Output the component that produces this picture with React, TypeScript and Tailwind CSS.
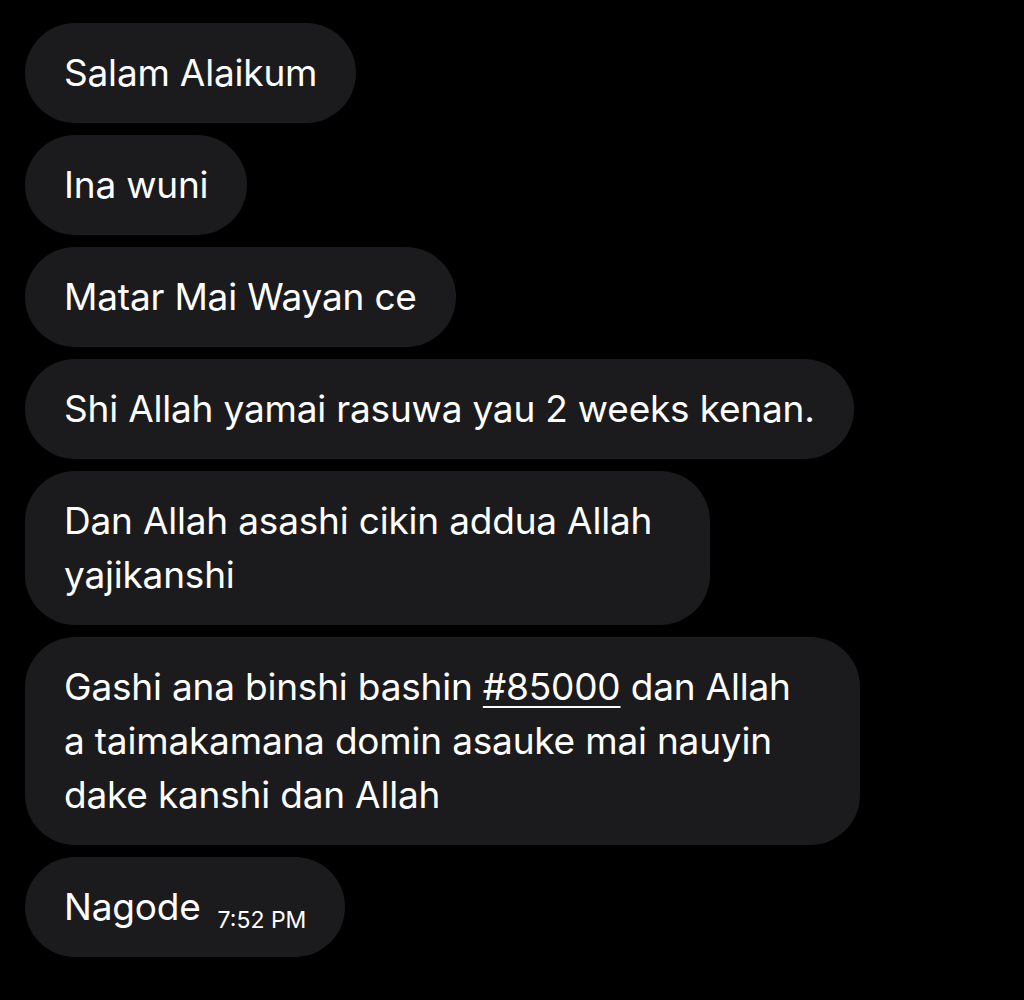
import React from "react";

const bubble = "bg-[#1b1b1d] rounded-[50px] px-[39px] py-[23px] text-white text-[37px] leading-[54px] tracking-[-0.2px]";

export default function App() {
  return (
    <div className="w-[1024px] h-[1000px] bg-black overflow-hidden pt-[23px] pl-[25px] flex flex-col items-start gap-[12px]" style={{ fontFamily: "Inter, 'Noto Sans', sans-serif" }}>
      <div className={bubble}>Salam Alaikum</div>
      <div className={bubble}>Ina wuni</div>
      <div className={bubble}>Matar Mai Wayan ce</div>
      <div className={bubble}>Shi Allah yamai rasuwa yau 2 weeks kenan.</div>
      <div className={`${bubble} w-[685px]`}>
        Dan Allah asashi cikin addua Allah
        <br />
        yajikanshi
      </div>
      <div className={`${bubble} w-[835px]`}>
        Gashi ana binshi bashin <span className="underline decoration-2 underline-offset-[6px]">#85000</span> dan Allah
        <br />
        a taimakamana domin asauke mai nauyin
        <br />
        dake kanshi dan Allah
      </div>
      <div className={`${bubble} h-[100px] flex items-baseline`}>
        <span>Nagode</span>
        <span className="ml-[17px] text-[23px] leading-none tracking-normal relative top-[8px]">7:52 PM</span>
      </div>
    </div>
  );
}
